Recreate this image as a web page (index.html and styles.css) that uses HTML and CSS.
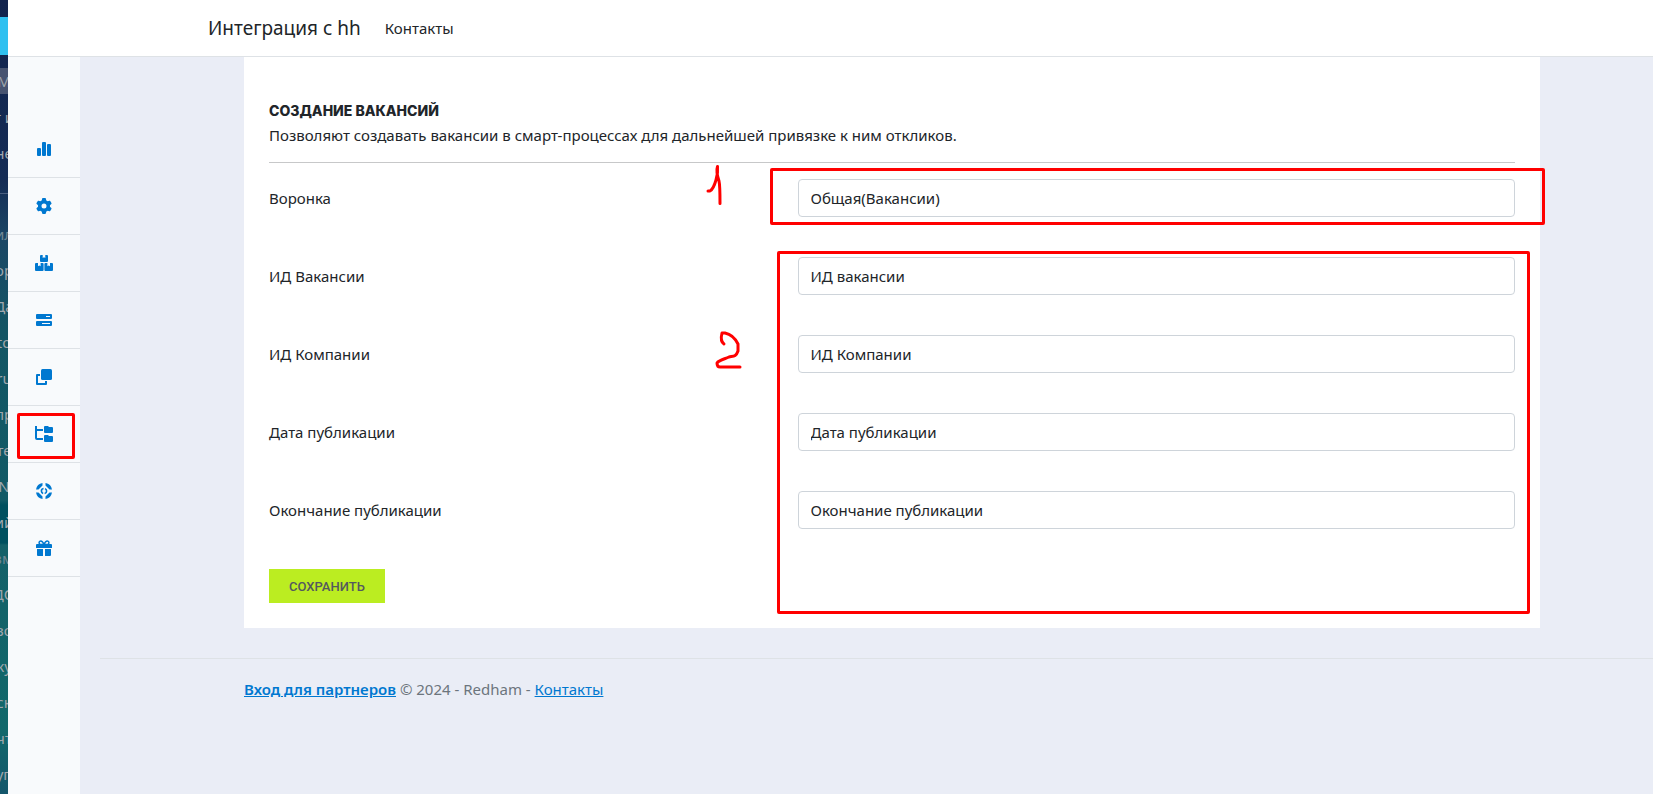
FILE: index.html
```html
<!DOCTYPE html>
<html lang="ru">
<head>
<meta charset="UTF-8" />
<meta name="viewport" content="width=device-width, initial-scale=1" />
<title>Интеграция с hh</title>
<link rel="stylesheet" href="styles.css">
</head>
<body>
  <div class="backdrop" aria-hidden="true">
    <div class="backdrop-tab"></div>
    <span class="marked">М</span>
    <span>т и</span>
    <span>не</span>
    <hr>
    <span class="dim">ил</span>
    <span>ор</span>
    <span>Да</span>
    <span>to</span>
    <span>ru</span>
    <span>пр</span>
    <span>те</span>
    <span>N</span>
    <span>ий</span>
    <span class="dim">зм</span>
    <span>ДО</span>
    <span>во</span>
    <span>ку</span>
    <span>ск</span>
    <span>чт</span>
    <span>уп</span>
  </div>

  <div class="app">
    <header class="topbar">
      <a class="brand" href="#">Интеграция с hh</a>
      <a class="nav-link" href="#">Контакты</a>
    </header>

    <div class="layout">
      <nav class="sidebar" aria-label="Меню">
        <a href="#" aria-label="Статистика">
          <svg width="18" height="16" viewBox="0 0 18 16"><rect x="2" y="7" width="4" height="8" rx="1"/><rect x="7" y="1" width="4" height="14" rx="1"/><rect x="12" y="3" width="4" height="12" rx="1"/></svg>
        </a>
        <a href="#" aria-label="Настройки">
          <svg width="16" height="16" viewBox="0 0 512 512"><path d="M495.9 166.6c3.2 8.7 .5 18.4-6.4 24.6l-43.3 39.4c1.1 8.3 1.7 16.8 1.7 25.4s-.6 17.1-1.7 25.4l43.3 39.4c6.9 6.2 9.6 15.9 6.4 24.6c-4.4 11.9-9.7 23.3-15.8 34.3l-4.7 8.1c-6.6 11-14 21.4-22.1 31.2c-5.9 7.2-15.7 9.6-24.5 6.8l-55.7-17.7c-13.4 10.3-28.2 18.9-44 25.4l-12.5 57.1c-2 9.1-9 16.3-18.2 17.8c-13.8 2.3-28 3.5-42.5 3.5s-28.7-1.2-42.5-3.5c-9.2-1.5-16.2-8.7-18.2-17.8l-12.5-57.1c-15.8-6.5-30.6-15.1-44-25.4L83.1 425.9c-8.8 2.8-18.6 .3-24.5-6.8c-8.1-9.8-15.5-20.2-22.1-31.2l-4.7-8.1c-6.1-11-11.4-22.4-15.8-34.3c-3.2-8.7-.5-18.4 6.4-24.6l43.3-39.4C64.6 273.1 64 264.6 64 256s.6-17.1 1.7-25.4L22.4 191.2c-6.9-6.2-9.6-15.9-6.4-24.6c4.4-11.9 9.7-23.3 15.8-34.3l4.7-8.1c6.6-11 14-21.4 22.1-31.2c5.9-7.2 15.7-9.6 24.5-6.8l55.7 17.7c13.4-10.3 28.2-18.9 44-25.4l12.5-57.1c2-9.1 9-16.3 18.2-17.8C227.3 1.2 241.5 0 256 0s28.7 1.2 42.5 3.5c9.2 1.5 16.2 8.7 18.2 17.8l12.5 57.1c15.8 6.5 30.6 15.1 44 25.4l55.7-17.7c8.8-2.8 18.6-.3 24.5 6.8c8.1 9.8 15.5 20.2 22.1 31.2l4.7 8.1c6.1 11 11.4 22.4 15.8 34.3zM256 336a80 80 0 1 0 0-160 80 80 0 1 0 0 160z"/></svg>
        </a>
        <a href="#" aria-label="Модули">
          <svg width="18" height="16" viewBox="0 0 18 16"><path d="M6 0h1.700v3l1.300-.7 1.300.7V0H12a1 1 0 0 1 1 1v5a1 1 0 0 1-1 1H6a1 1 0 0 1-1-1V1a1 1 0 0 1 1-1zM1 8h2v3.300l1.300-.7 1.300.7V8h2a1 1 0 0 1 1 1v6a1 1 0 0 1-1 1H1a1 1 0 0 1-1-1V9a1 1 0 0 1 1-1zM10.400 8h2v3.300l1.300-.7 1.300.7V8h2a1 1 0 0 1 1 1v6a1 1 0 0 1-1 1h-6.600a1 1 0 0 1-1-1V9a1 1 0 0 1 1-1z"/></svg>
        </a>
        <a href="#" aria-label="Поля">
          <svg width="16" height="12" viewBox="0 0 16 12"><path fill-rule="evenodd" d="M1 0h14a1 1 0 0 1 1 1v3a1 1 0 0 1-1 1H1a1 1 0 0 1-1-1V1a1 1 0 0 1 1-1zM10 2v1h4V2zM1 7h14a1 1 0 0 1 1 1v3a1 1 0 0 1-1 1H1a1 1 0 0 1-1-1V8a1 1 0 0 1 1-1zM6 9v1h8V9z"/></svg>
        </a>
        <a href="#" aria-label="Копии">
          <svg width="16" height="16" viewBox="0 0 16 16"><rect x="5" y="0" width="11" height="11" rx="1.500"/><path d="M4 6H1v9h9v-3" fill="none" stroke="currentColor" stroke-width="2" stroke-linejoin="round"/></svg>
        </a>
        <a href="#" aria-label="Вакансии" aria-current="page">
          <svg width="18" height="16" viewBox="0 0 18 16"><path d="M1 0v12a1 1 0 0 0 1 1h6M1 4h7" fill="none" stroke="currentColor" stroke-width="2"/><path d="M9 1a1 1 0 0 1 1-1h3l1 1h3a1 1 0 0 1 1 1v4a1 1 0 0 1-1 1h-7a1 1 0 0 1-1-1zM9 10a1 1 0 0 1 1-1h3l1 1h3a1 1 0 0 1 1 1v4a1 1 0 0 1-1 1h-7a1 1 0 0 1-1-1z"/></svg>
          <span class="mark mark-menu"></span>
        </a>
        <a href="#" aria-label="Поддержка">
          <svg width="16" height="16" viewBox="0 0 16 16"><path d="M6.500 0v2.500L2.500 6.500H0A8 8 0 0 1 6.500 0zM9.500 0A8 8 0 0 1 16 6.500h-2.500L9.500 2.500zM16 9.500A8 8 0 0 1 9.500 16v-2.500l4-4zM6.500 16A8 8 0 0 1 0 9.500h2.500l4 4z"/><circle cx="8" cy="8" r="2.600" fill="none" stroke="currentColor" stroke-width="1.600" stroke-dasharray="6.600 1.560" stroke-dashoffset="3.300"/></svg>
        </a>
        <a href="#" aria-label="Бонусы">
          <svg width="16" height="16" viewBox="0 0 16 16"><path d="M1 4h14a1 1 0 0 1 1 1v3H0V5a1 1 0 0 1 1-1zM1 9h6v7H2a1 1 0 0 1-1-1zM9 9h6v6a1 1 0 0 1-1 1H9z"/><path d="M8 4.500C7 2 6 1 4.700 1 2.500 1 2.500 4.500 4.700 4.500H11.300C13.500 4.500 13.500 1 11.300 1 10 1 9 2 8 4.500z" fill="none" stroke="currentColor" stroke-width="1.500"/></svg>
        </a>
      </nav>

      <div class="content">
        <main class="container card">
          <h1>СОЗДАНИЕ ВАКАНСИЙ</h1>
          <p>Позволяют создавать вакансии в смарт-процессах для дальнейшей привязке к ним откликов.</p>
          <hr>
          <form>
            <div class="row">
              <label for="funnel">Воронка</label>
              <div class="control">
                <select id="funnel"><option>Общая(Вакансии)</option></select>
                <span class="mark mark-funnel"></span>
                <svg class="digit digit-one" width="20" height="44" viewBox="0 0 20 44"><path d="M2 28h2c2-1 4-4 6-11s2-9 1.500-13.500C10 8 11 12 13 18c1 4 1 14 1 22.500"/></svg>
              </div>
            </div>
            <div class="row">
              <label for="vacancy">ИД Вакансии</label>
              <div class="control">
                <select id="vacancy"><option>ИД вакансии</option></select>
                <span class="mark mark-fields"></span>
              </div>
            </div>
            <div class="row">
              <label for="company">ИД Компании</label>
              <div class="control">
                <select id="company"><option>ИД Компании</option></select>
                <svg class="digit digit-two" width="30" height="40" viewBox="0 0 30 40"><path d="M9 13C6 11 6 6 7 2h3c5 1 9 3 13 11v7c-2 6-5 5-9 6-4 2-10 3-12 6 0 2 1 4 3 4h20"/></svg>
              </div>
            </div>
            <div class="row">
              <label for="start">Дата публикации</label>
              <div class="control">
                <select id="start"><option>Дата публикации</option></select>
              </div>
            </div>
            <div class="row">
              <label for="end">Окончание публикации</label>
              <div class="control">
                <select id="end"><option>Окончание публикации</option></select>
              </div>
            </div>
            <button type="submit">СОХРАНИТЬ</button>
          </form>
        </main>

        <footer>
          <div class="container">
            <a class="partners" href="#">Вход для партнеров</a> © 2024 - Redham - <a href="#">Контакты</a>
          </div>
        </footer>
      </div>
    </div>
  </div>
</body>
</html>
```
FILE: styles.css
```css
* {
  box-sizing: border-box;
}

body {
  margin: 0;
  display: flex;
  min-height: 100vh;
  background: #eaedf6;
  color: #212529;
  font-family: "Segoe UI", "Noto Sans", sans-serif;
  font-size: 15px;
  line-height: 24px;
}

a {
  color: #0078d0;
}

/* Edge of the portal menu under the app */
.backdrop {
  flex: none;
  width: 8px;
  height: 100vh;
  overflow: hidden;
  display: flex;
  flex-direction: column;
  background: linear-gradient(#12234d 0, #152c55 180px, #1b4765 240px, #135564 330px, #125a66 500px, #00505f 505px, #00505f 543px, #146068 545px, #11686b 730px, #14566b 794px);
  color: #9fa6ad;
}

.backdrop-tab {
  flex: none;
  height: 38px;
  margin: 17px 0 8px;
  background: #2fc0f0;
}

.backdrop span {
  flex: none;
  height: 36px;
  line-height: 36px;
  display: flex;
  justify-content: center;
  white-space: nowrap;
}

.backdrop .marked {
  height: 26px;
  line-height: 26px;
  margin: 5px 0;
  background: #475370;
}

.backdrop .dim {
  color: #6f8794;
}

.backdrop hr {
  flex: none;
  width: 100%;
  margin: 22px 0;
  border: 0;
  border-top: 1px solid #4a5f80;
}

.app {
  flex: 1;
  min-width: 0;
  display: flex;
  flex-direction: column;
}

/* Header */
.topbar {
  display: flex;
  align-items: center;
  gap: 24px;
  height: 57px;
  padding-left: 200px;
  background: #fff;
  border-bottom: 1px solid #dee2e6;
}

.topbar a {
  color: #212529;
  text-decoration: none;
}

.topbar .brand {
  font-size: 19px;
}

.layout {
  flex: 1;
  display: flex;
}

/* Sidebar */
.sidebar {
  flex: none;
  width: 72px;
  padding-top: 64px;
  background: #f8fafc;
}

.sidebar a {
  position: relative;
  display: flex;
  align-items: center;
  justify-content: center;
  height: 57px;
  border-bottom: 1px solid #dee2e6;
}

.sidebar svg {
  fill: currentColor;
}

/* Content */
.content {
  flex: 1;
  min-width: 0;
  padding-left: 51px;
}

.container {
  max-width: 1296px;
  margin: 0 auto;
}

.card {
  padding: 41px 25px 25px;
  background: #fff;
}

h1 {
  margin: 0;
  font-family: Inter, sans-serif;
  font-size: 14px;
  font-weight: 800;
  line-height: 25px;
}

p {
  margin: 0;
}

.card hr {
  margin: 15px 0 16px;
  border: 0;
  border-top: 1px solid #c7c8c9;
}

.row {
  display: grid;
  grid-template-columns: 5fr 7fr;
  align-items: center;
  gap: 16px;
  margin-bottom: 40px;
}

.control {
  position: relative;
}

select {
  display: block;
  width: 100%;
  height: 38px;
  padding: 0 12px;
  appearance: none;
  background: #fff;
  border: 1px solid #ced4da;
  border-radius: 4px;
  color: #212529;
  font: inherit;
}

button {
  display: block;
  height: 34px;
  padding: 0 20px;
  border: 0;
  background: #bbed21;
  color: #54595f;
  font-family: Roboto, sans-serif;
  font-size: 13px;
  font-weight: 500;
}

/* Footer */
footer {
  margin: 30px 0 0 -31px;
  padding-left: 31px;
  border-top: 1px solid #dee2e6;
  color: #6c757d;
  line-height: 60px;
}

.partners {
  font-weight: 600;
}

/* Red marks over the page */
.mark {
  position: absolute;
  border: 3px solid #f00;
  border-radius: 2px;
  pointer-events: none;
}

.mark-menu {
  top: 7px;
  left: 9px;
  right: 5px;
  height: 46px;
}

.mark-funnel {
  top: -11px;
  left: -28px;
  right: -30px;
  height: 57px;
}

.mark-fields {
  top: -6px;
  left: -21px;
  right: -15px;
  height: 363px;
  z-index: 1;
}

.digit {
  position: absolute;
  fill: none;
  stroke: #f00;
  stroke-width: 3px;
  stroke-linecap: round;
  stroke-linejoin: round;
}

.digit-one {
  top: -16px;
  left: -92px;
}

.digit-two {
  top: -4px;
  left: -83px;
}
```
